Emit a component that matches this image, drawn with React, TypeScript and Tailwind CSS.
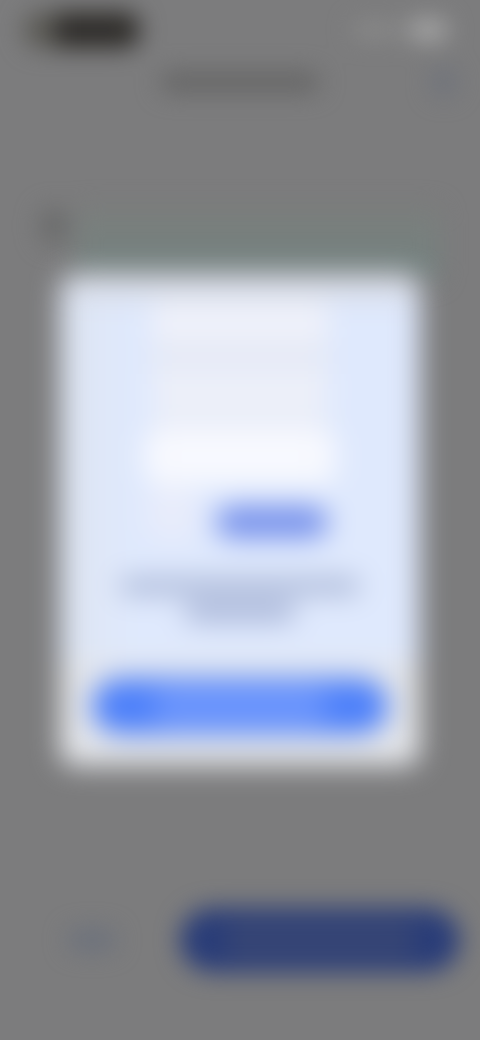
import clsx from "clsx";

type BarProps = {
  className?: string;
};

function Bar({ className }: BarProps) {
  return <div className={clsx("rounded-full", className)} />;
}

function StatusBar() {
  return (
    <div className="flex items-center justify-between pl-6 pr-8">
      <div className="flex h-9 w-[116px] overflow-hidden rounded-2xl bg-[#2e2c29]">
        <div className="w-8 bg-[#5c5b56]" />
      </div>
      <div className="flex items-center gap-2">
        <Bar className="h-4 w-12 bg-[#8b8b8b]" />
        <Bar className="h-5 w-10 bg-[#aaaaaa]" />
      </div>
    </div>
  );
}

function Header() {
  return (
    <header className="grid grid-cols-[1fr_auto_1fr] items-center px-6">
      <div />
      <Bar className="h-5 w-40 bg-[#656565]" />
      <button
        type="button"
        aria-label="Menu"
        className="h-7 w-6 justify-self-end rounded-full bg-[#6e727b]"
      />
    </header>
  );
}

function Banner() {
  return (
    <div className="mx-10 flex h-20 gap-2 pt-2">
      <Bar className="h-9 w-7 bg-[#6a6b6b]" />
      <div className="h-full flex-1 rounded-lg bg-linear-to-b from-[#7a7e7c] to-[#748280]" />
    </div>
  );
}

function Footer() {
  return (
    <footer className="flex items-center gap-16 pl-[68px] pr-5">
      <button
        type="button"
        aria-label="Back"
        className="h-5 w-12 rounded-full bg-[#6a707c]"
      />
      <button
        type="button"
        aria-label="Next"
        className="flex h-16 flex-1 items-center justify-center rounded-full bg-[#2a3d78]"
      >
        <Bar className="h-10 w-48 bg-[#364575]" />
      </button>
    </footer>
  );
}

function Modal() {
  return (
    <div
      role="dialog"
      aria-label="Notice"
      className="flex w-3/4 flex-col overflow-hidden rounded-2xl bg-linear-to-r from-[#dee5f1] from-0% via-[#dfe9fd] via-20% to-[#dfe9fd] to-90%"
    >
      <div className="h-7 bg-linear-to-b from-[#d8dce4] to-[#dae1f0]" />
      <div className="flex flex-col items-center px-8 pb-10">
        <div className="flex w-44 flex-col">
          <div className="h-9 rounded-lg bg-[#f0f2fb]" />
          <div className="h-9 bg-[#e6eaf6]" />
          <div className="h-8 bg-[#edf0fa]" />
          <div className="h-6 bg-[#e9edf8]" />
        </div>
        <div className="h-14 w-48 rounded-2xl bg-linear-to-b from-[#f9faff] to-[#f6f8fe]" />
        <div className="flex w-48 items-start gap-4">
          <Bar className="h-14 w-14 bg-[#e8ecfb]" />
          <div className="pt-5">
            <Bar className="h-8 w-28 bg-[#7590eb]" />
          </div>
        </div>
        <div className="flex flex-col items-center gap-2 pt-9">
          <Bar className="h-4 w-60 bg-[#a6b3d3]" />
          <Bar className="h-5 w-28 bg-[#a8b5d7]" />
        </div>
      </div>
      <div className="bg-[#e4e6ea] px-8 pb-8 pt-4">
        <button
          type="button"
          aria-label="Confirm"
          className="flex h-14 w-full items-center justify-center rounded-full bg-[#4d80fa]"
        >
          <Bar className="h-10 w-44 bg-[#6b95fd]" />
        </button>
      </div>
    </div>
  );
}

function App() {
  return (
    <div className="relative min-h-screen overflow-hidden bg-[#7c7c7d]">
      <div className="flex min-h-screen flex-col pb-[68px] pt-3 blur-[12px]">
        <StatusBar />
        <div className="pt-5">
          <Header />
        </div>
        <div className="pt-[104px]">
          <Banner />
        </div>
        <div className="mt-auto">
          <Footer />
        </div>
      </div>
      <div className="absolute inset-0 flex items-center justify-center blur-[14px]">
        <Modal />
      </div>
    </div>
  );
}

export default App;
